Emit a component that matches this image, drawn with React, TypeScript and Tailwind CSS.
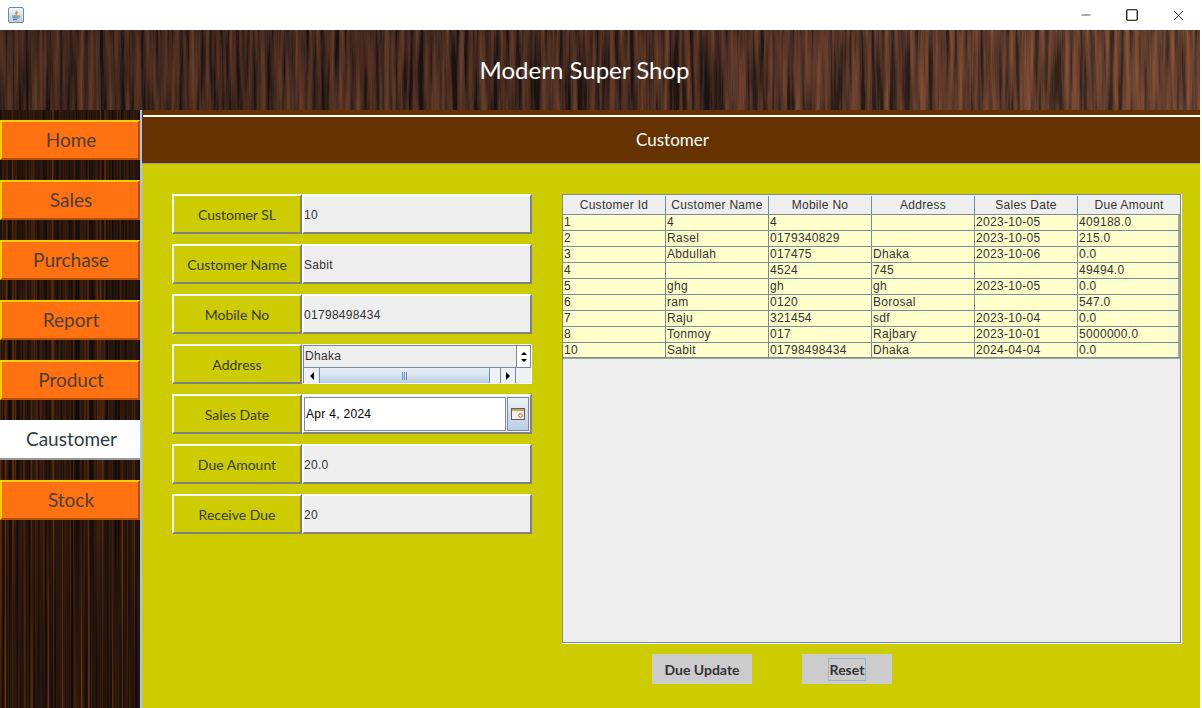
import React from 'react';
import { Minus, Square, X } from 'lucide-react';

const NAV = ['Home', 'Sales', 'Purchase', 'Report', 'Product', 'Caustomer', 'Stock'];

const COLUMNS = ['Customer Id', 'Customer Name', 'Mobile No', 'Address', 'Sales Date', 'Due Amount'];

const ROWS = [
  ['1', '4', '4', '', '2023-10-05', '409188.0'],
  ['2', 'Rasel', '0179340829', '', '2023-10-05', '215.0'],
  ['3', 'Abdullah', '017475', 'Dhaka', '2023-10-06', '0.0'],
  ['4', '', '4524', '745', '', '49494.0'],
  ['5', 'ghg', 'gh', 'gh', '2023-10-05', '0.0'],
  ['6', 'ram', '0120', 'Borosal', '', '547.0'],
  ['7', 'Raju', '321454', 'sdf', '2023-10-04', '0.0'],
  ['8', 'Tonmoy', '017', 'Rajbary', '2023-10-01', '5000000.0'],
  ['10', 'Sabit', '01798498434', 'Dhaka', '2024-04-04', '0.0'],
];

const DISPLAY = "font-['Lato',sans-serif]";
const DIALOG = "font-['Liberation_Sans',Arial,sans-serif] tracking-[0.3px]";

const HeaderWood = () => (
  <svg className="absolute inset-0 h-full w-full" preserveAspectRatio="none">
    <defs>
      <filter id="headerGrain" x="0" y="0" width="100%" height="100%" colorInterpolationFilters="sRGB">
        <feTurbulence type="fractalNoise" baseFrequency="0.2 0.008" numOctaves="4" seed="7" />
        <feColorMatrix values="1 0 0 0 0 1 0 0 0 0 1 0 0 0 0 0 0 0 0 1" />
        <feComponentTransfer>
          <feFuncR type="table" tableValues="0.1 0.1 0.11 0.15 0.25 0.33 0.39 0.45 0.5 0.54 0.54" />
          <feFuncG type="table" tableValues="0.08 0.08 0.08 0.1 0.16 0.2 0.24 0.27 0.3 0.32 0.32" />
          <feFuncB type="table" tableValues="0.07 0.07 0.07 0.08 0.12 0.15 0.17 0.19 0.21 0.22 0.22" />
        </feComponentTransfer>
      </filter>
      <linearGradient id="headerShade" x1="0" x2="1" y1="0" y2="0">
        <stop offset="0" stopColor="#000" stopOpacity="0.25" />
        <stop offset="0.55" stopColor="#000" stopOpacity="0.15" />
        <stop offset="1" stopColor="#ffb080" stopOpacity="0.1" />
      </linearGradient>
    </defs>
    <rect width="100%" height="100%" filter="url(#headerGrain)" />
    <rect width="100%" height="100%" fill="url(#headerShade)" />
  </svg>
);

const SidebarWood = () => (
  <svg className="absolute inset-0 h-full w-full" preserveAspectRatio="none">
    <defs>
      <filter id="sideGrain" x="0" y="0" width="100%" height="100%" colorInterpolationFilters="sRGB">
        <feTurbulence type="fractalNoise" baseFrequency="0.42 0.002" numOctaves="3" seed="12" />
        <feColorMatrix values="1 0 0 0 0 1 0 0 0 0 1 0 0 0 0 0 0 0 0 1" />
        <feComponentTransfer>
          <feFuncR type="table" tableValues="0.06 0.06 0.07 0.09 0.12 0.16 0.22 0.3 0.4 0.48 0.5" />
          <feFuncG type="table" tableValues="0.03 0.03 0.04 0.05 0.07 0.09 0.11 0.15 0.2 0.25 0.26" />
          <feFuncB type="table" tableValues="0.03 0.03 0.03 0.03 0.04 0.05 0.05 0.06 0.08 0.1 0.1" />
        </feComponentTransfer>
      </filter>
    </defs>
    <rect width="100%" height="100%" filter="url(#sideGrain)" />
  </svg>
);

const JavaIcon = () => (
  <svg width="16" height="16" viewBox="0 0 16 16">
    <defs>
      <linearGradient id="javaBg" x1="0" x2="0" y1="0" y2="1">
        <stop offset="0" stopColor="#f4f7fa" />
        <stop offset="1" stopColor="#bccbdb" />
      </linearGradient>
    </defs>
    <rect x="0.5" y="0.5" width="15" height="15" rx="1.5" fill="url(#javaBg)" stroke="#6f8aa5" />
    <path d="M8.5 2.5c1 1.5-2 2.8-1.2 4.6.3.7.9 1 1.2 1.3-.2-1.2 2.2-2.2 1.1-4.1-.2.6-.6.9-.9 1 .3-1 .5-1.9-.2-2.8z" fill="#e8791e" />
    <path d="M4 9h6.5M4.5 10.8h5.5M5 12.6h4" stroke="#4f7396" strokeWidth="1" fill="none" />
    <path d="M10.5 9c2 -.5 2 1.6 -.3 2" stroke="#4f7396" strokeWidth="0.8" fill="none" />
  </svg>
);

const TitleBar = () => (
  <div className="flex h-[30px] items-center justify-between bg-white pl-2">
    <JavaIcon />
    <div className="flex items-center text-black">
      <span className="flex w-[46px] justify-center"><Minus size={14} strokeWidth={1.1} /></span>
      <span className="flex w-[46px] justify-center"><Square size={14} strokeWidth={1.2} absoluteStrokeWidth /></span>
      <span className="flex w-[46px] justify-center"><X size={17} strokeWidth={1.1} /></span>
      <span className="w-[1px]" />
    </div>
  </div>
);

const FormLabel = ({ text }: { text: string }) => (
  <div className={`flex h-10 w-[130px] items-center justify-center border-2 border-t-white border-l-white border-r-[#808080] border-b-[#808080] bg-[#cccc00] text-[14px] text-[#3a3a10] ${DISPLAY}`}>
    {text}
  </div>
);

const FormValue = ({ text }: { text: string }) => (
  <div className={`flex h-10 w-[230px] items-center border-2 border-t-white border-l-white border-r-[#808080] border-b-[#808080] bg-[#eeeeee] pt-[1px] text-[12px] text-[#333333] ${DIALOG}`}>
    {text}
  </div>
);

const AddressScroll = () => (
  <div className={`h-10 w-[230px] border border-white ${DIALOG}`}>
    <div className="flex h-full flex-col border-t border-l border-[#7a8a99]">
      <div className="flex h-[22px]">
        <div className="flex-1 border-b border-[#7a8a99] bg-[#eeeeee] pl-[1px] text-[12px] leading-[20px] text-[#333333]">Dhaka</div>
        <div className="flex w-[15px] flex-col items-center justify-center gap-[4px] border-x border-b border-[#7a8a99] bg-white">
          <span className="h-0 w-0 border-x-[3px] border-b-[3px] border-x-transparent border-b-black" />
          <span className="h-0 w-0 border-x-[3px] border-t-[3px] border-x-transparent border-t-black" />
        </div>
      </div>
      <div className="flex flex-1 bg-[#eef2f6]">
        <div className="flex w-[15px] items-center justify-center">
          <span className="h-0 w-0 border-y-[4px] border-r-[4px] border-y-transparent border-r-black" />
        </div>
        <div className="flex w-[171px] items-center justify-center gap-[1px] border-x border-[#6f8fb8] bg-gradient-to-b from-[#e8f0f8] via-[#d8e4f0] to-[#b8cfe4]">
          <span className="h-2 w-px bg-[#6f8fb8]" />
          <span className="h-2 w-px bg-[#6f8fb8]" />
          <span className="h-2 w-px bg-[#6f8fb8]" />
        </div>
        <div className="w-[10px]" />
        <div className="flex w-[15px] items-center justify-center border-l border-[#7a8a99]">
          <span className="h-0 w-0 border-y-[4px] border-l-[4px] border-y-transparent border-l-black" />
        </div>
        <div className="flex-1 border-l border-[#7a8a99]" />
      </div>
    </div>
  </div>
);

const DatePicker = () => (
  <div className={`flex h-10 w-[230px] gap-[1px] border-2 border-t-white border-l-white border-r-[#808080] border-b-[#808080] bg-[#eeeeee] p-[1px] pl-0 ${DIALOG}`}>
    <div className="flex h-full flex-1 items-center border border-[#8090a0] bg-white pl-[1px] text-[12px] text-black">Apr 4, 2024</div>
    <div className="flex w-[22px] items-center justify-center border border-[#7a8a99] bg-gradient-to-b from-[#eef3f8] to-[#b8cfe4]">
      <svg width="14" height="12" viewBox="0 0 14 12">
        <rect x="0.5" y="0.5" width="13" height="11" fill="#f6f0e2" stroke="#55606b" />
        <rect x="1" y="1" width="12" height="2" fill="#d9a05b" />
        <circle cx="9.5" cy="7.5" r="1.8" fill="none" stroke="#d85050" />
      </svg>
    </div>
  </div>
);

const CustomerForm = () => (
  <div className="flex w-[360px] flex-col gap-[10px]">
    <div className="flex"><FormLabel text="Customer SL" /><FormValue text="10" /></div>
    <div className="flex"><FormLabel text="Customer Name" /><FormValue text="Sabit" /></div>
    <div className="flex"><FormLabel text="Mobile No" /><FormValue text="01798498434" /></div>
    <div className="flex"><FormLabel text="Address" /><AddressScroll /></div>
    <div className="flex"><FormLabel text="Sales Date" /><DatePicker /></div>
    <div className="flex"><FormLabel text="Due Amount" /><FormValue text="20.0" /></div>
    <div className="flex"><FormLabel text="Receive Due" /><FormValue text="20" /></div>
  </div>
);

const CustomerTable = () => (
  <div className={`h-[450px] w-[620px] border-r border-b border-white ${DIALOG}`}>
    <div className="h-full border border-[#7a8a99] bg-[#eeeeee]">
      <div className="flex h-5 border-b border-[#7a8a99] pt-[1px]">
        {COLUMNS.map((col) => (
          <div key={col} className="flex w-[103px] shrink-0 items-center justify-center border-r border-[#7a8a99] text-[12px] text-[#333333] last:w-[102px] last:border-r-0">
            {col}
          </div>
        ))}
      </div>
      {ROWS.map((row) => (
        <div key={row[0]} className="flex h-4 bg-[#ffffcc] last:border-b last:border-[#a0a890]">
          {row.map((cell, i) => (
            <div key={i} className="w-[103px] shrink-0 truncate border-r border-b border-[#7a8a99] pl-[1px] text-[12px] leading-[15px] text-[#333333] last:w-[102px] last:border-r-2 last:border-r-[#a0a890]">
              {cell}
            </div>
          ))}
        </div>
      ))}
    </div>
  </div>
);

export default function App() {
  return (
    <div className="flex h-[708px] w-[1202px] flex-col overflow-hidden bg-white">
      <TitleBar />
      <div className="relative flex h-20 w-[1200px] items-center justify-center">
        <HeaderWood />
        <h1 className={`relative pr-[31px] text-[24px] text-white ${DISPLAY}`}>Modern Super Shop</h1>
      </div>
      <div className="flex flex-1">
        <aside className="relative flex w-[140px] flex-col gap-5 pt-[10px]">
          <SidebarWood />
          {NAV.map((item) => (
            <button
              key={item}
              className={
                item === 'Caustomer'
                  ? `relative flex h-10 w-[140px] items-center justify-center border-b-2 border-[#999999] bg-white pl-[3px] text-[19px] text-[#333a44] ${DISPLAY}`
                  : `relative flex h-10 w-[140px] items-center justify-center border-2 border-t-[#ffcc00] border-l-[#ffcc00] border-r-[#b35000] border-b-[#b35000] bg-[#ff7111] pl-[2px] text-[19px] text-[#4a4038] ${DISPLAY}`
              }
            >
              {item}
            </button>
          ))}
        </aside>
        <div className="w-[2px] bg-[#a8c4ea]" />
        <main className="flex w-[1058px] flex-col">
          <div className="flex h-[53px] flex-col bg-[#663300]">
            <div className="mt-[5px] ml-[1px] h-[2px] bg-white" />
            <div className={`ml-[1px] flex flex-1 items-center justify-center pl-[2px] text-[17px] text-white ${DISPLAY}`}>Customer</div>
          </div>
          <div className="flex flex-1 flex-col border-t border-[#999999] bg-[#cccc00] pl-[30px] pt-[30px]">
            <div className="flex gap-[30px]">
              <CustomerForm />
              <CustomerTable />
            </div>
            <div className={`mt-[10px] ml-[480px] flex gap-[50px] text-[14px] text-[#333333] ${DISPLAY}`}>
              <button className="flex h-[30px] w-[100px] items-center justify-center bg-[#cccccc] font-bold">Due Update</button>
              <button className="flex h-[30px] w-[90px] items-center justify-center bg-[#cccccc] font-bold">
                <span className="border border-[#a0b4c8] px-[1px]">Reset</span>
              </button>
            </div>
          </div>
        </main>
      </div>
    </div>
  );
}
